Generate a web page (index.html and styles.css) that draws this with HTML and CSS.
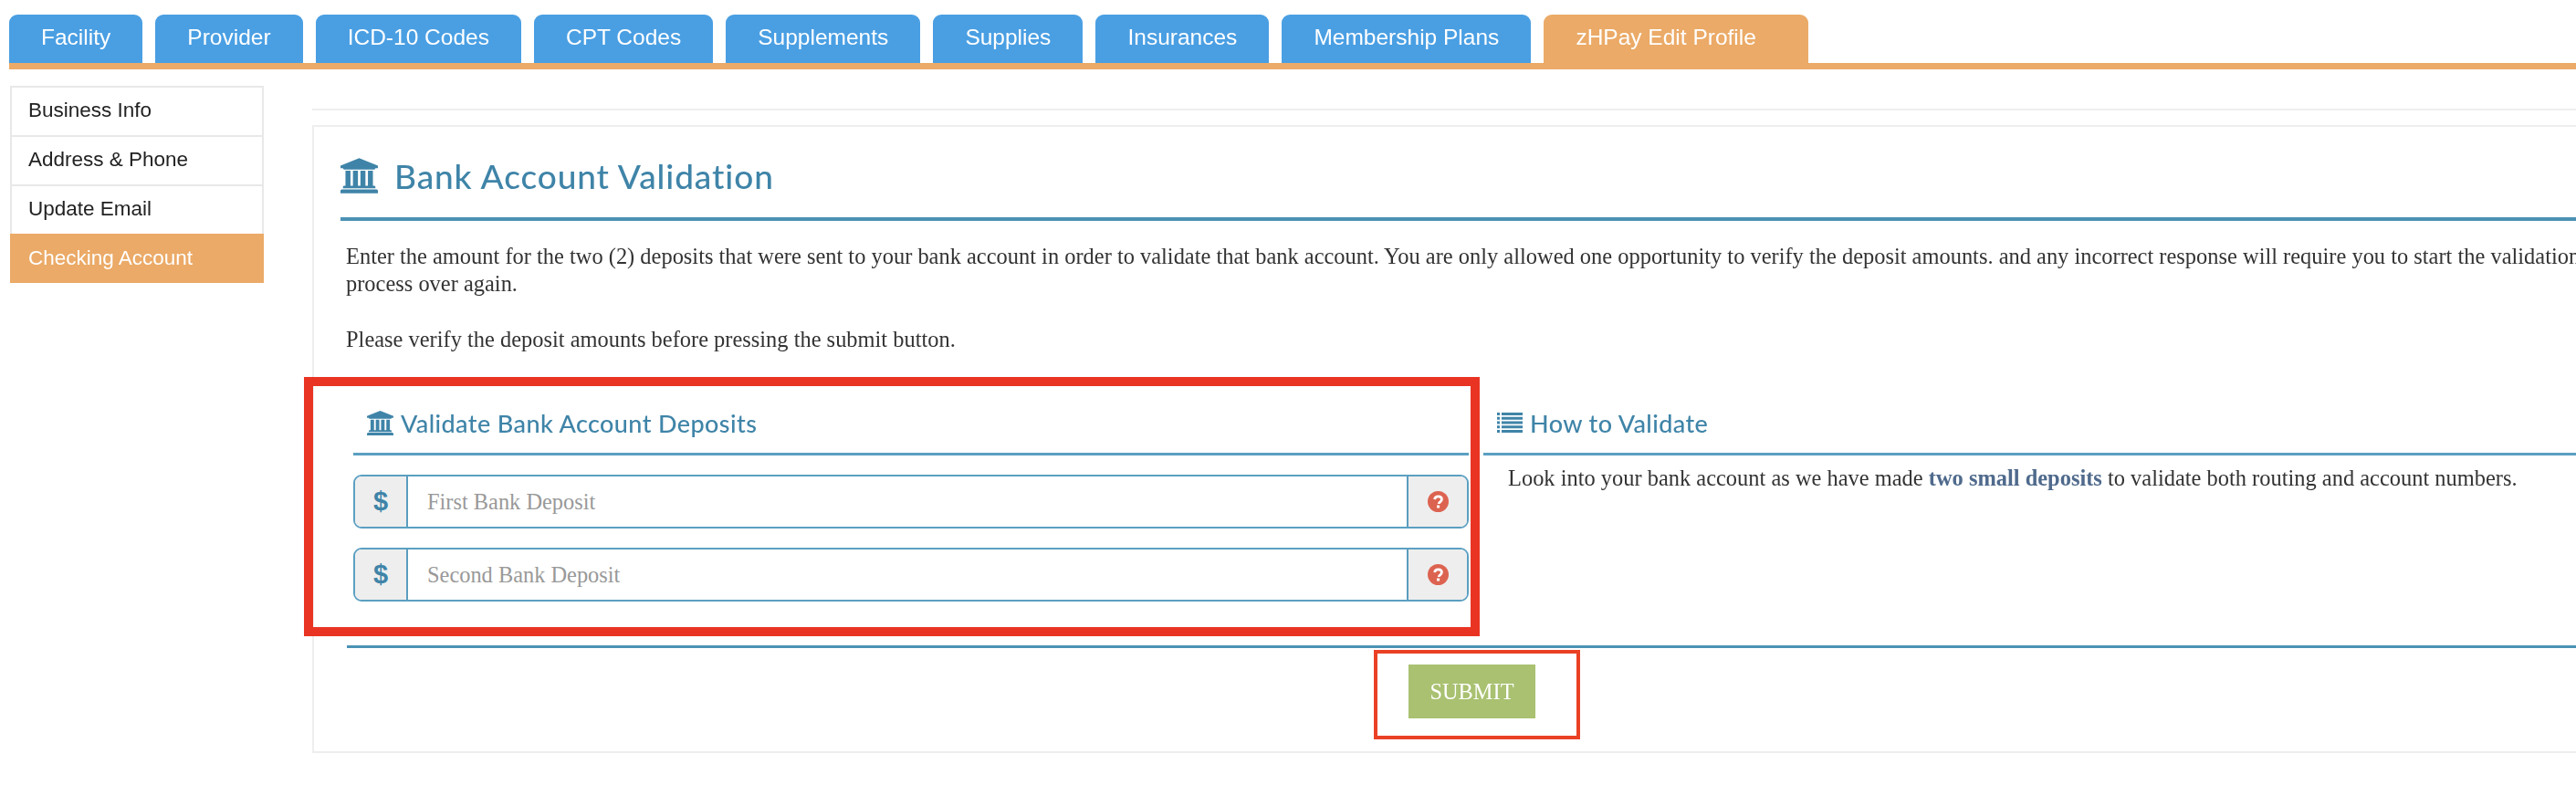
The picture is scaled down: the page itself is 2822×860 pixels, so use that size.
FILE: index.html
```html
<!DOCTYPE html>
<html lang="en">
<head>
    <meta charset="UTF-8">
    <title>Bank Account Validation</title>
    <link rel="stylesheet" href="styles.css">
</head>
<body>
    <svg class="defs" width="0" height="0">
        <symbol id="bank" viewBox="0 0 1920 1792">
            <path d="M960 0l960 384v128h-128q0 26-20.5 45t-48.5 19h-1526q-28 0-48.5-19t-20.5-45h-128v-128zm-704 640h256v768h128v-768h256v768h128v-768h256v768h128v-768h256v768h59q28 0 48.5 19t20.5 45v64h-1664v-64q0-26 20.5-45t48.5-19h59v-768zm1595 960q28 0 48.5 19t20.5 45v128h-1920v-128q0-26 20.5-45t48.5-19h1782z"/>
        </symbol>
        <symbol id="help" viewBox="0 0 24 24">
            <circle cx="12" cy="12" r="12" fill="#dc6350"/>
            <path d="M8 9.6c.2-2.200 1.900-3.400 4.100-3.400 2.300 0 4 1.300 4 3.300 0 2.900-3.300 2.700-3.300 5" fill="none" stroke="#fff" stroke-width="2.900"/>
            <rect x="10.500" y="16.200" width="3.200" height="3.100" fill="#fff"/>
        </symbol>
    </svg>

    <nav class="tabs">
        <a class="tab">Facility</a>
        <a class="tab">Provider</a>
        <a class="tab">ICD-10 Codes</a>
        <a class="tab">CPT Codes</a>
        <a class="tab">Supplements</a>
        <a class="tab">Supplies</a>
        <a class="tab">Insurances</a>
        <a class="tab">Membership Plans</a>
        <a class="tab active">zHPay Edit Profile</a>
    </nav>

    <div class="layout">
        <ul class="side">
            <li>Business Info</li>
            <li>Address &amp; Phone</li>
            <li>Update Email</li>
            <li class="active">Checking Account</li>
        </ul>

        <main class="content">
            <div class="top-rule"></div>
            <section class="panel">
                <h1 class="title">
                    <svg class="title-icon"><use href="#bank"/></svg>
                    Bank Account Validation
                </h1>

                <div class="intro">
                    <p>Enter the amount for the two (2) deposits that were sent to your bank account in order to validate that bank account. You are only allowed one opportunity to verify the deposit amounts. and any incorrect response will require you to start the validation<br>process over again.</p>
                    <p>Please verify the deposit amounts before pressing the submit button.</p>
                </div>

                <div class="columns">
                    <div class="col">
                        <h2 class="sub">
                            <svg class="sub-icon bank-icon"><use href="#bank"/></svg>
                            Validate Bank Account Deposits
                        </h2>
                        <div class="group">
                            <span class="addon dollar">$</span>
                            <input class="field" type="text" placeholder="First Bank Deposit">
                            <span class="addon help"><svg class="help-icon"><use href="#help"/></svg></span>
                        </div>
                        <div class="group">
                            <span class="addon dollar">$</span>
                            <input class="field" type="text" placeholder="Second Bank Deposit">
                            <span class="addon help"><svg class="help-icon"><use href="#help"/></svg></span>
                        </div>
                    </div>
                    <div class="col">
                        <h2 class="sub">
                            <svg class="sub-icon list-icon" viewBox="0 0 28 22">
                                <path d="M0 0h3v3H0zM5 0h23v3H5zM0 4.750h3v3H0zM5 4.750h23v3H5zM0 9.500h3v3H0zM5 9.500h23v3H5zM0 14.250h3v3H0zM5 14.250h23v3H5zM0 19h3v3H0zM5 19h23v3H5z"/>
                            </svg>
                            How to Validate
                        </h2>
                        <p class="how">Look into your bank account as we have made <b>two small deposits</b> to validate both routing and account numbers.</p>
                    </div>
                </div>

                <div class="actions">
                    <button class="submit" type="button">SUBMIT</button>
                </div>
            </section>
        </main>
    </div>

    <!-- red boxes drawn over the screenshot -->
    <div class="mark mark-form"></div>
    <div class="mark mark-submit"></div>
</body>
</html>
```

FILE: styles.css
```css
html, body {
    margin: 0;
    height: 860px;
    overflow: hidden;
    background: #fff;
}
body {
    position: relative;
    width: 2822px;
    font-family: 'Liberation Serif', serif;
    color: #333;
}
.defs {
    position: absolute;
}

/* the reference is a soft, scaled up capture */
.tabs, .layout {
    filter: blur(.6px);
}

/* top tabs */
.tabs {
    display: flex;
    gap: 14.1px;
    margin-left: 10px;
    padding-top: 16px;
    border-bottom: 7px solid #ebaa67;
}
.tab {
    height: 53px;
    padding: 0 35px;
    border-radius: 9px 9px 0 0;
    background: #4a9fe3;
    color: #fff;
    font: 24.5px/50px 'Liberation Sans', sans-serif;
}
.tab.active {
    padding-right: 57px;
    background: #ebaa67;
}

.layout {
    display: flex;
    align-items: flex-start;
    gap: 53px;
    padding: 18px 0 0 11px;
}

/* left menu */
.side {
    flex: none;
    width: 278px;
    margin: 0;
    padding: 0;
    list-style: none;
    font: 22.5px/47px 'Liberation Sans', sans-serif;
    color: #222;
}
.side li {
    box-sizing: border-box;
    height: 54px;
    padding: 1px 18px;
    border: 2px solid #e8e8e8;
    border-bottom: 0;
}
.side li.active {
    background: #ebaa67;
    border-color: #ebaa67;
    color: #fff;
}

.content {
    flex: none;
    width: 2600px;
}
.top-rule {
    height: 2px;
    margin-top: 25px;
    background: #eeeeee;
}
.panel {
    box-sizing: border-box;
    height: 688px;
    margin-top: 16px;
    padding: 0 29px;
    border: 2px solid #eeeeee;
}

/* headings */
.title {
    display: flex;
    align-items: center;
    gap: 18px;
    height: 103px;
    margin: 0;
    padding-top: 8px;
    box-sizing: border-box;
    border-bottom: 4px solid #4b92b4;
    font: 500 37px/37px 'Lato', sans-serif;
    letter-spacing: .9px;
    color: #3f84a8;
}
.title-icon {
    width: 41px;
    height: 39px;
    fill: #3f84a8;
}

.intro {
    padding-left: 6px;
    font-size: 24.45px;
    line-height: 30px;
}
.intro p {
    margin: 31px 0 0;
    white-space: nowrap;
}
.intro p:first-child {
    margin-top: 24px;
}

.columns {
    display: grid;
    grid-template-columns: 1222px 1fr;
    column-gap: 16px;
    margin: 33px 0 0 14px;
}
.sub {
    display: flex;
    align-items: center;
    gap: 8px;
    box-sizing: border-box;
    height: 79px;
    margin: 0;
    padding: 10px 0 0 15px;
    border-bottom: 3px solid #5ba0c2;
    font: 500 27px 'Lato', sans-serif;
    letter-spacing: .4px;
    color: #3f84a8;
}
.sub-icon {
    fill: #3f84a8;
}
.bank-icon {
    width: 29px;
    height: 27px;
}
.list-icon {
    width: 28px;
    height: 22px;
}

/* input rows */
.group {
    display: flex;
    box-sizing: border-box;
    height: 59px;
    margin-top: 21px;
    border: 2px solid #5ba0c2;
    border-radius: 9px;
    overflow: hidden;
}
.addon {
    display: flex;
    flex: none;
    align-items: center;
    justify-content: center;
    background: #eeeeee;
}
.dollar {
    width: 56px;
    border-right: 2px solid #5b9dbd;
    font: 700 29px 'Liberation Sans', sans-serif;
    color: #3f84a8;
}
.help {
    width: 64px;
    border-left: 2px solid #5b9dbd;
}
.help-icon {
    width: 23px;
    height: 23px;
}
.field {
    flex: 1;
    min-width: 0;
    padding: 0 21px;
    border: 0;
    outline: 0;
    font: 24.4px 'Liberation Serif', serif;
}
.field::placeholder {
    color: #999;
    opacity: 1;
}

.how {
    margin: 10px 0 0 27px;
    font-size: 24.45px;
    line-height: 30px;
}
.how b {
    color: #4f6a8c;
}

.actions {
    width: 2497px;
    margin: 48px 0 0 7px;
    padding-top: 18px;
    border-top: 3px solid #4b92b4;
}
.submit {
    display: block;
    width: 139px;
    height: 59px;
    margin-left: 1163px;
    border: 0;
    background: #a9c171;
    color: #fff;
    font: 24.4px 'Liberation Serif', serif;
}

/* annotation boxes */
.mark {
    position: absolute;
    box-sizing: border-box;
    pointer-events: none;
}
.mark-form {
    left: 333px;
    top: 413px;
    width: 1288px;
    height: 284px;
    border: 10px solid #e93424;
}
.mark-submit {
    left: 1505px;
    top: 712px;
    width: 226px;
    height: 98px;
    border: 4px solid #ea4125;
}
```
